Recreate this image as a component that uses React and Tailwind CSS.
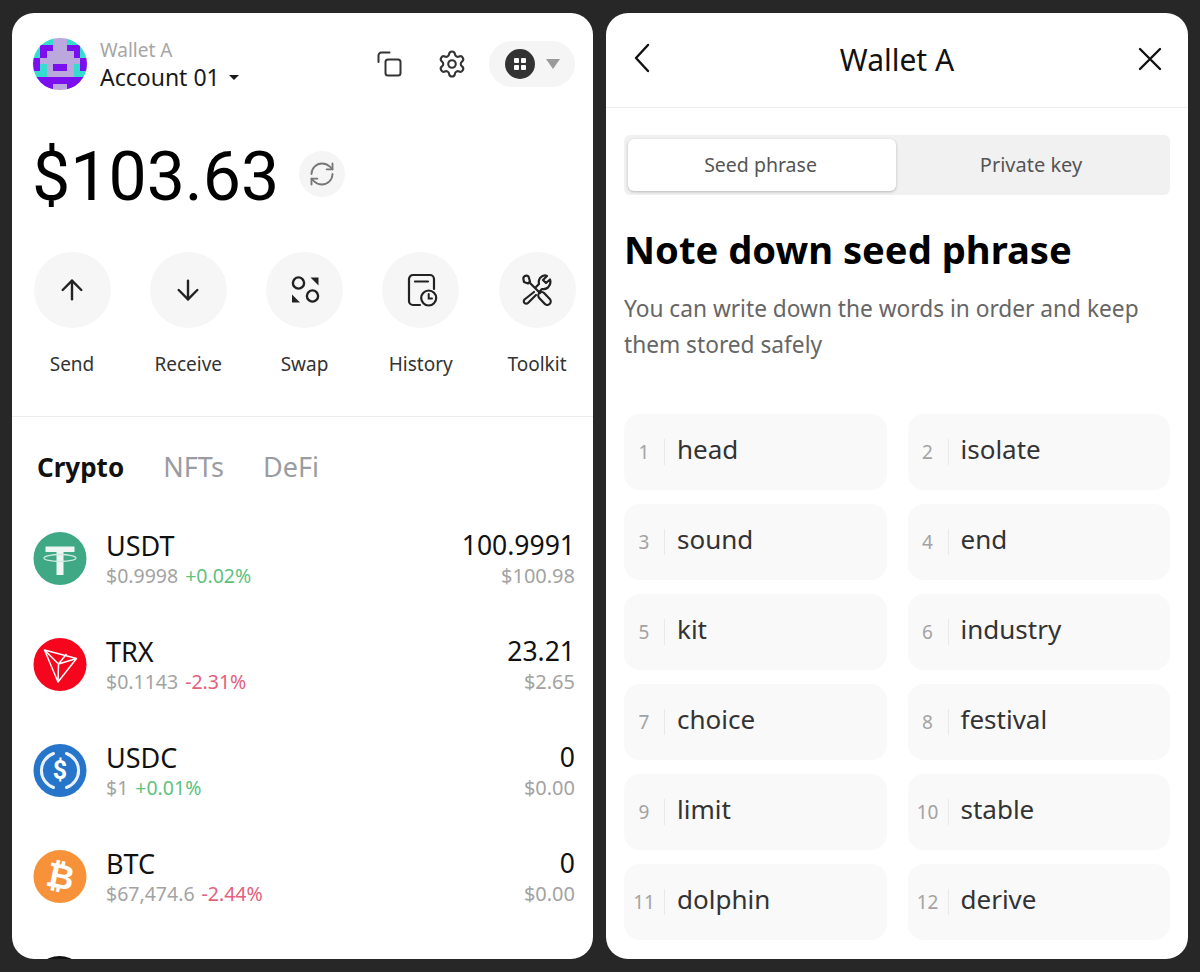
import React from 'react';
import { Settings, RefreshCw, ArrowUp, ArrowDown } from 'lucide-react';

const P = '#7a10f0';
const L = '#bba8dc';
const C = '#35dccf';
const AVATAR = [
  [C, C, C, L, L, C, C, C],
  [C, P, P, L, L, P, P, C],
  [C, P, L, L, L, L, P, C],
  [P, L, L, L, L, L, L, P],
  [P, C, L, P, P, L, C, P],
  [C, C, L, L, L, L, C, C],
  [P, P, P, P, P, P, P, P],
  [C, P, P, L, L, P, P, C],
];

const Avatar = () => (
  <svg width="54" height="52" viewBox="0 0 8 8" preserveAspectRatio="none" className="shrink-0 rounded-full" shapeRendering="crispEdges">
    {AVATAR.map((row, y) => row.map((c, x) => <rect key={x + '-' + y} x={x} y={y} width="1.02" height="1.02" fill={c} />))}
  </svg>
);

const CopyIcon = () => (
  <svg width="28" height="28" viewBox="0 0 28 28" fill="none" stroke="#333" strokeWidth="2" strokeLinecap="round" strokeLinejoin="round">
    <path d="M2.500 12V5.500a3 3 0 0 1 3-3h8" />
    <rect x="9.500" y="9.500" width="15" height="16" rx="2.500" />
  </svg>
);

const SwapIcon = () => (
  <svg width="30" height="30" viewBox="0 0 30 30" fill="none" stroke="#222" strokeWidth="2.400">
    <circle cx="8.500" cy="8" r="5.600" />
    <circle cx="22.500" cy="21" r="5.600" />
    <path d="M20.500 2.500H28.500V10.500z M2 27.500V19.500L10 27.500z" fill="#222" stroke="none" />
  </svg>
);

const HistoryIcon = () => (
  <svg width="32" height="34" viewBox="0 0 32 34" fill="none" stroke="#222" strokeWidth="2.200" strokeLinecap="round" className="translate-x-[2px]">
    <path d="M13 32H6a4 4 0 0 1-4-4V6a4 4 0 0 1 4-4H23a4 4 0 0 1 4 4V16" />
    <path d="M8 8.500h13" />
    <circle cx="21.700" cy="25" r="7.500" />
    <path d="M21.700 21V25.500H25" strokeWidth="2" />
  </svg>
);

const ToolkitIcon = () => (
  <svg width="32" height="32" viewBox="0 0 32 32" fill="none" stroke="#222" strokeWidth="2.200" strokeLinecap="round" strokeLinejoin="round">
    <path d="M2.500 5.500a3 3 0 0 1 5-3l1.500 5-2 2-4-1.500z" />
    <path d="M8.500 8.500L19 19" />
    <rect x="16" y="21" width="15" height="7" rx="3.500" transform="rotate(47 23.500 24.500)" />
    <path d="M15 13l3-3a7.500 7.500 0 0 1 1-6c2-2 5-3 7-2l-4 4 3 3 4-3.500c1 3 0 6-2 8-2 1.500-4 2-6 1.500l-3 3" />
    <path d="M13 18L3.500 25.500a2.200 2.200 0 0 0 3.500 3.500L15 21" />
  </svg>
);

const GridBadge = () => (
  <div className="w-[30px] h-[30px] rounded-full bg-[#333] grid grid-cols-2 gap-[1.500px] p-[9px]">
    <span className="bg-white rounded-[1px]" />
    <span className="bg-white rounded-[1px]" />
    <span className="bg-white rounded-[1px]" />
    <span className="bg-white rounded-[1px]" />
  </div>
);

const UsdtIcon = () => (
  <svg width="54" height="53" viewBox="0 0 53 53">
    <circle cx="26.500" cy="26.500" r="26.500" fill="#3fa884" />
    <path d="M12 14.500h29v5.500h-11v23h-7V20H12z" fill="#eef7f3" />
    <ellipse cx="26.500" cy="26" rx="16" ry="3.500" fill="none" stroke="#cfe9df" strokeWidth="1.300" />
  </svg>
);

const TrxIcon = () => (
  <svg width="54" height="53" viewBox="0 0 53 53">
    <circle cx="26.500" cy="26.500" r="26.500" fill="#f5061c" />
    <path d="M11 12l32 8.500L24.500 44z M11 12l14 14 18-5.500 M25 26l-.500 18 M25 26L33 16" fill="none" stroke="#fff" strokeWidth="1.500" strokeLinejoin="round" />
  </svg>
);

const UsdcIcon = () => (
  <svg width="54" height="53" viewBox="0 0 53 53">
    <circle cx="26.500" cy="26.500" r="26.500" fill="#2775ca" />
    <path d="M20 9.500a18 18 0 0 0 0 34M33 9.500a18 18 0 0 1 0 34" fill="none" stroke="#fff" strokeWidth="3" strokeLinecap="round" opacity="0.9" />
    <text x="26.500" y="35" textAnchor="middle" fontSize="25" fontWeight="700" fill="#fff" fontFamily="Roboto, sans-serif">$</text>
  </svg>
);

const BtcIcon = () => (
  <svg width="54" height="53" viewBox="0 0 53 53">
    <circle cx="26.500" cy="26.500" r="26.500" fill="#f7923a" />
    <text x="27" y="38" textAnchor="middle" fontSize="34" fontWeight="700" fill="#fff" fontFamily="Roboto, sans-serif" transform="rotate(12 26.500 26.500)">₿</text>
  </svg>
);

const ACTIONS = [
  { label: 'Send', icon: <ArrowUp size={32} strokeWidth={1.8} color="#222" /> },
  { label: 'Receive', icon: <ArrowDown size={32} strokeWidth={1.8} color="#222" /> },
  { label: 'Swap', icon: <SwapIcon /> },
  { label: 'History', icon: <HistoryIcon /> },
  { label: 'Toolkit', icon: <ToolkitIcon /> },
];

const TOKENS = [
  { name: 'USDT', icon: <UsdtIcon />, price: '$0.9998', change: '+0.02%', up: true, amount: '100.9991', value: '$100.98' },
  { name: 'TRX', icon: <TrxIcon />, price: '$0.1143', change: '-2.31%', up: false, amount: '23.21', value: '$2.65' },
  { name: 'USDC', icon: <UsdcIcon />, price: '$1', change: '+0.01%', up: true, amount: '0', value: '$0.00' },
  { name: 'BTC', icon: <BtcIcon />, price: '$67,474.6', change: '-2.44%', up: false, amount: '0', value: '$0.00' },
];

const WORDS = ['head', 'isolate', 'sound', 'end', 'kit', 'industry', 'choice', 'festival', 'limit', 'stable', 'dolphin', 'derive'];

const WalletPanel = () => (
  <div className="w-[581px] h-[946px] bg-white rounded-[22px] overflow-hidden">
    <div className="flex items-start h-[52px] mt-[25px] pl-[21px] pr-[18px]">
      <Avatar />
      <div className="ml-[13px] flex flex-col">
        <span className="text-[19px] leading-[24px] text-[#a6a6a6]">Wallet A</span>
        <div className="flex items-center gap-[9px] text-[23px] leading-[31px] text-[#1a1a1a]">
          Account 01
          <span className="w-0 h-0 border-x-[5px] border-x-transparent border-t-[5px] border-t-[#1a1a1a]" />
        </div>
      </div>
      <div className="ml-auto flex items-center h-[52px]">
        <CopyIcon />
        <Settings size={30} strokeWidth={1.7} color="#333" className="ml-[33px]" />
        <div className="ml-[22px] w-[86px] h-[46px] rounded-full bg-[#f5f5f5] flex items-center pl-[16px] gap-[11px]">
          <GridBadge />
          <span className="w-0 h-0 border-x-[7px] border-x-transparent border-t-[10px] border-t-[#9a9a9a]" />
        </div>
      </div>
    </div>

    <div className="flex items-center mt-[48px] pl-[20px]">
      <span className="text-[68px] leading-[78px] text-black font-[Roboto]">$103.63</span>
      <div className="ml-[20px] -mt-[7px] w-[46px] h-[46px] rounded-full bg-[#f5f5f5] flex items-center justify-center">
        <RefreshCw size={28} strokeWidth={1.6} color="#777" />
      </div>
    </div>

    <div className="flex justify-between mt-[36px] pl-[20px] pr-[16px] pb-[39px] border-b border-[#ececec]">
      {ACTIONS.map((a) => (
        <div key={a.label} className="w-[80px] flex flex-col items-center">
          <div className="w-[77px] h-[76px] rounded-full bg-[#f6f6f6] flex items-center justify-center">{a.icon}</div>
          <span className="mt-[23px] text-[19px] leading-[26px] text-[#333]">{a.label}</span>
        </div>
      ))}
    </div>

    <div className="flex gap-[39px] mt-[33px] pl-[25px] text-[27px] leading-[34px] text-[#9a9ca1]">
      <span className="font-bold text-[26px] text-[#111]">Crypto</span>
      <span>NFTs</span>
      <span>DeFi</span>
    </div>

    <div className="mt-[48px] flex flex-col gap-[53px] pl-[21px] pr-[18px]">
      {TOKENS.map((t) => (
        <div key={t.name} className="flex items-center h-[53px]">
          {t.icon}
          <div className="ml-[19px] pt-[2px] flex flex-col">
            <span className="text-[27px] leading-[31px] text-[#111]">{t.name}</span>
            <div className="mt-[1px] flex gap-[7px] text-[19.500px] leading-[27px]">
              <span className="text-[#a3a3a3]">{t.price}</span>
              <span className={t.up ? 'text-[#5cc27f]' : 'text-[#e4607e]'}>{t.change}</span>
            </div>
          </div>
          <div className="ml-auto pt-[2px] flex flex-col items-end">
            <span className="text-[26.500px] leading-[31px] text-[#111]">{t.amount}</span>
            <span className="mt-[1px] text-[20px] leading-[27px] text-[#a3a3a3]">{t.value}</span>
          </div>
        </div>
      ))}
      <div className="w-[53px] h-[53px] rounded-full bg-[#111] shrink-0" />
    </div>
  </div>
);

const SeedPanel = () => (
  <div className="w-[582px] h-[946px] bg-white rounded-[22px] overflow-hidden">
    <div className="relative h-[95px] border-b border-[#eeeeee] flex items-center justify-center">
      <svg width="18" height="30" viewBox="0 0 18 30" fill="none" stroke="#111" strokeWidth="2.400" strokeLinecap="round" strokeLinejoin="round" className="absolute left-[27px] top-[30px]">
        <path d="M15 2L3 15l12 13" />
      </svg>
      <span className="text-[30px] text-[#111] -mt-[1px]">Wallet A</span>
      <svg width="26" height="26" viewBox="0 0 26 26" fill="none" stroke="#111" strokeWidth="2.400" strokeLinecap="round" className="absolute right-[25px] top-[33px]">
        <path d="M3 3l20 20M23 3L3 23" />
      </svg>
    </div>

    <div className="mx-[18px] mt-[27px] h-[60px] rounded-[6px] bg-[#f1f1f1] flex p-[4px] text-[#555]">
      <div className="w-[268px] pr-[3px] text-[19.500px] rounded-[6px] bg-white shadow-[0_1px_3px_rgba(0,0,0,0.25)] flex items-center justify-center">Seed phrase</div>
      <div className="flex-1 text-[20px] flex items-center justify-center">Private key</div>
    </div>

    <h1 className="mx-[18px] mt-[28px] text-[38.200px] leading-[52px] font-bold text-black">Note down seed phrase</h1>
    <p className="mx-[18px] mt-[16px] text-[22.700px] leading-[36px] text-[#666]">You can write down the words in order and keep them stored safely</p>

    <div className="mx-[18px] mt-[51px] grid grid-cols-2 gap-x-[21px] gap-y-[14px]">
      {WORDS.map((w, i) => (
        <div key={w} className="h-[76px] rounded-[16px] bg-[#f9f9f9] flex items-center">
          <span className="w-[40px] text-center text-[19px] text-[#a3a3a3]">{i + 1}</span>
          <span className="w-px h-[26px] bg-[#e9e9e9]" />
          <span className="ml-[12px] -mt-[5px] text-[26px] text-[#333]">{w}</span>
        </div>
      ))}
    </div>
  </div>
);

export default function App() {
  return (
    <div className="w-[1200px] h-[972px] bg-[#272727] flex gap-[13px] pt-[13px] pl-[12px] overflow-hidden font-['Noto_Sans',sans-serif]">
      <WalletPanel />
      <SeedPanel />
    </div>
  );
}
